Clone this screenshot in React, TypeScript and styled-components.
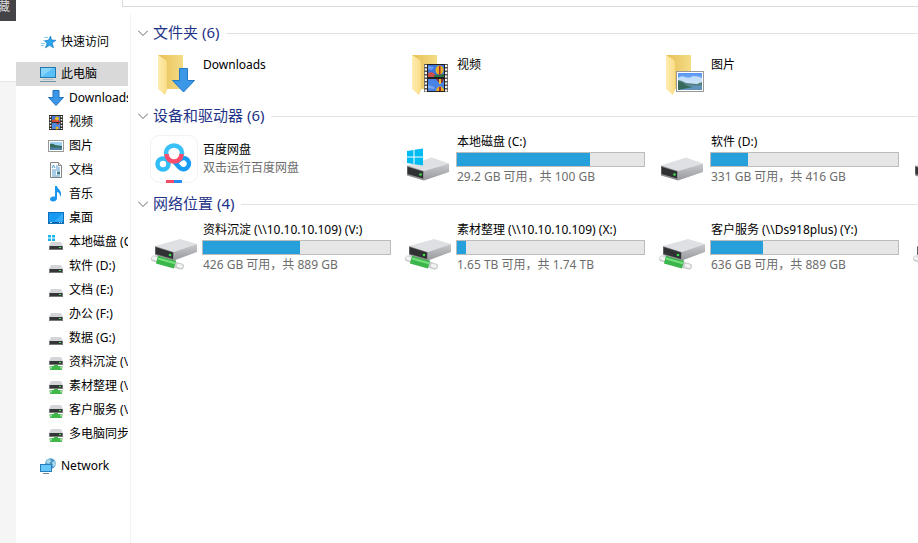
import React, { useState } from "react";
import styled, { createGlobalStyle } from "styled-components";

const GlobalStyle = createGlobalStyle`
  * { box-sizing: border-box; }
  body {
    margin: 0;
    background: #fff;
    color: #000;
    font: 12px/16px "Noto Sans", "Noto Sans CJK SC", sans-serif;
    overflow: hidden;
  }
  button { font: inherit; color: inherit; border: 0; background: none; padding: 0; margin: 0; text-align: left; cursor: default; }
  svg { display: block; flex: none; }
`;

const Window = styled.div`
  display: grid;
  grid-template-columns: 16px minmax(0, 1fr);
  min-height: 100vh;
`;
const Strip = styled.aside`
  display: flex;
  flex-direction: column;
`;
const StripTab = styled.div`
  height: 21px;
  background: #444347;
  color: #dcdcdc;
  line-height: 13px;
  overflow: hidden;
  display: flex;
  justify-content: flex-end;
  padding-right: 6px;
`;
const StripBody = styled.div`
  flex: 1;
  margin-top: 60px;
  background: #f5f5f5;
  border-top: 1px solid #e6e6e6;
`;
const Explorer = styled.div`
  display: flex;
  flex-direction: column;
  min-width: 0;
`;
const AddressBar = styled.div`
  height: 7px;
  margin-left: 106px;
  border: solid #d9d9d9;
  border-width: 0 0 1px 1px;
`;
const Panes = styled.div`
  flex: 1;
  display: grid;
  grid-template-columns: 115px minmax(0, 1fr);
  padding-top: 7px;
`;
const Sidebar = styled.nav`
  display: flex;
  flex-direction: column;
  gap: 8px;
  padding: 16px 2px 0 0;
  border-right: 1px solid #f2f2f2;
`;
const TreeGroup = styled.div`
  display: flex;
  flex-direction: column;
`;
const TreeItem = styled.button<{ $child?: boolean; $selected?: boolean }>`
  display: flex;
  align-items: center;
  gap: 5px;
  height: 24px;
  padding-left: ${(p) => (p.$child ? 32 : 24)}px;
  background: ${(p) => (p.$selected ? "#d9d9d9" : "transparent")};
  white-space: nowrap;
  overflow: hidden;
`;
const Content = styled.main`
  padding: 7px 0 0 7px;
  overflow: hidden;
`;
const Section = styled.section<{ $gap: number }>`
  margin-bottom: ${(p) => p.$gap}px;
`;
const SectionHeader = styled.h2`
  margin: 0;
  font-size: 15px;
  font-weight: 400;
  line-height: 22px;
  display: flex;
  align-items: center;
  gap: 7px;
  color: #1e3287;
  &::after { content: ""; flex: 1; height: 1px; background: #e2e2e2; }
`;
const Toggle = styled.button`
  display: flex;
  align-items: center;
  gap: 5px;
`;
const ToggleLabel = styled.span`
  padding-bottom: 2px;
`;
const Tiles = styled.div`
  display: grid;
  grid-template-columns: repeat(4, 254px);
  padding: 6px 0 0 12px;
`;
const Tile = styled.div`
  display: flex;
  gap: 4px;
  height: 50px;
`;
const TileText = styled.div<{ $top?: number }>`
  width: 189px;
  padding-top: ${(p) => p.$top ?? 0}px;
  white-space: nowrap;
`;
const Name = styled.div<{ $tall?: boolean }>`
  line-height: ${(p) => (p.$tall ? 18 : 16)}px;
  padding-left: 1px;
`;
const Detail = styled(Name)`
  color: #6d6d6d;
`;
const Track = styled.div`
  height: 15px;
  margin: 2px 0;
  border: 1px solid #bcbcbc;
  background: #e6e6e6;
`;
const Fill = styled.div`
  height: 100%;
  background: #26a0da;
`;

const Small = ({ children }: { children: React.ReactNode }) => (
  <svg width="16" height="16" viewBox="0 0 16 16" aria-hidden="true">{children}</svg>
);
const Large = ({ children }: { children: React.ReactNode }) => (
  <svg width="48" height="50" viewBox="0 0 48 50" aria-hidden="true">{children}</svg>
);

const Star = () => (
  <Small>
    <path d="M10.500 2l1 4 4.300.3-3.600 2.700 1.300 4.800-3.800-2.500-4.200 2.500 1.500-4.500L4.500 6.800l4-.6z" fill="#2ba4ee" stroke="#1679c0" strokeWidth=".7" />
    <path d="M4 3.500h4M3 6.500h2M1 9.500h4M1 11.500h3" stroke="#8ccbed" strokeWidth="1" />
  </Small>
);
const Monitor = () => (
  <Small>
    <rect x=".5" y="1.500" width="15" height="10" fill="#5cc0f8" stroke="#2378ae" />
    <path d="M1 11V2h12z" fill="#86d3fb" />
    <path d="M3 13.500h10" stroke="#b5bdc4" />
    <path d="M0 15.500h16" stroke="#6f94ad" />
  </Small>
);
const Arrow = () => (
  <Small><path d="M5 .5h6v7h4.500L8 15.500.5 7.500H5z" fill="#3a96e8" stroke="#1f73bd" /></Small>
);
const Film = () => (
  <Small>
    <rect x="1" y="1" width="14" height="15" fill="#302c29" />
    <path d="M2.500 2v13M13.500 2v13" stroke="#fff" strokeWidth="1.500" strokeDasharray="1.500 1.500" />
    <rect x="4" y="2" width="8" height="6" fill="#4376d8" /><rect x="4" y="9" width="8" height="6" fill="#4f8ae5" />
    <path d="M4 6l4-1 4 2v1H4z" fill="#d34d38" /><circle cx="9" cy="4.500" r="2" fill="#eebb20" />
    <path d="M8 9h3l-1 2z" fill="#b92f22" /><circle cx="9" cy="14" r="1.500" fill="#e3b720" />
  </Small>
);
const Photo = () => (
  <Small>
    <rect x=".5" y="2.500" width="15" height="11" fill="#fff" stroke="#999" />
    <path d="M2 4h12v8H2z" fill="#9fd0f4" /><path d="M2 6q3-1 5 1l7 1v2H2z" fill="#356c5b" /><path d="M2 9.500h12V12H2z" fill="#4b80a4" />
  </Small>
);
const Doc = () => (
  <Small>
    <path d="M2.500.5h8l3 3v12h-11z" fill="#fff" stroke="#858585" /><path d="M10.500.5v3h3" fill="#eee" stroke="#858585" />
    <path d="M4 6l1.500-3L7 6M8 4h2M8 6h4M4 8h8M4 10h4M4 12h4M4 14h8" stroke="#3c8dc5" fill="none" strokeWidth=".9" />
    <path d="M9 9.500h3v3H9z" fill="#397c8c" />
  </Small>
);
const Music = () => (
  <Small>
    <path d="M7 0h2c0 3 5 4 4 9l-1 2c.3-3-1-4.500-3-5v6.500c0 2-2 3-4 3S2 14.500 2 13s2-3 5-2.500z" fill="#1c96ec" />
  </Small>
);
const Desktop = () => (
  <Small>
    <rect x=".5" y="2.500" width="15" height="11" fill="#189af2" stroke="#0e6fbb" />
    <path d="M15 3v8L6 12z" fill="#36adfb" /><path d="M1 12.500h14" stroke="#0b5b9e" /><path d="M2 12.500h2M11 12.500h1M13 12.500h1" stroke="#c5eaff" />
  </Small>
);
const SmallDriveBody = ({ y }: { y: number }) => (
  <g transform={`translate(0 ${y})`}>
    <path d="M3 0h10l2 4H1z" fill="#d3d5d8" /><rect x="1" y="4" width="14" height="4" fill="#77797b" />
    <rect x="2" y="4" width="12" height="3" fill="#343638" /><rect x="11" y="5" width="2" height="1" fill="#4ee05b" />
  </g>
);
const Drive = () => <Small><SmallDriveBody y={7} /></Small>;
const SystemDrive = () => (
  <Small>
    <SmallDriveBody y={8} />
    <path d="M0 1h3v2.500H0zM4 1h3v2.500H4zM0 4.500h3V7H0zM4 4.500h3V7H4z" fill="#19b5ef" />
  </Small>
);
const NetDrive = () => (
  <Small>
    <SmallDriveBody y={3} />
    <path d="M6 11h4v1h4v4H2v-4h4z" fill="#42b74c" /><path d="M1 12.500h3v2H1zM12 12.500h3v2h-3z" fill="#a5d9a8" />
  </Small>
);
const NetworkIcon = () => (
  <Small>
    <circle cx="10.500" cy="5.500" r="5.300" fill="#4b96c6" /><path d="M7 2l3-1 1 2-2 3-3-1zM12 4l3-1 1 4-3 2z" fill="#a9d8e8" />
    <rect x=".5" y="6.500" width="11" height="7" fill="#66c7fb" stroke="#287dbb" /><path d="M3 15.500h6" stroke="#66869c" />
  </Small>
);

const FolderShape = () => (
  <>
    <path d="M8 4h25v34H14z" fill="url(#folderBack)" />
    <path d="M8 4l8 5 1 3v27l-2 5-7-6z" fill="url(#folderFront)" />
  </>
);
const FolderDownload = () => (
  <Large><FolderShape /><path d="M29.500 17.500h8v12h7l-11 11.500-11-11.500h7z" fill="#3b98e8" stroke="#2479c4" /></Large>
);
const FolderVideo = () => (
  <Large>
    <FolderShape />
    <rect x="20" y="13" width="24" height="28" fill="#5c5a57" />
    <path d="M22 14v27M42 14v27" stroke="#f5f5f5" strokeWidth="2.500" strokeDasharray="2 1.500" />
    <rect x="23" y="13" width="18" height="28" fill="#22201f" />
    <rect x="24" y="14" width="16" height="12" fill="#3c73dc" /><rect x="24" y="28" width="16" height="12" fill="#4a83e6" />
    <path d="M24 22l4-1 4 3v2h-8z" fill="#cf504a" /><path d="M30 24l10-1v3H30z" fill="#28754b" />
    <ellipse cx="35.500" cy="19" rx="4" ry="4.500" fill="#e7af22" /><path d="M35 15h1.500v9H35z" fill="#a72731" />
    <path d="M24 15l6 1-2 3-4-1z" fill="#6b9df0" /><path d="M32 28h8l-2 4h-3z" fill="#8d3030" /><path d="M35 28h2v5h-2z" fill="#eac337" />
    <path d="M32 40c0-6 8-6 8 0z" fill="#e7af22" /><path d="M35 36h2v4h-2z" fill="#a72731" /><path d="M24 34l6 2v2l-6-1z" fill="#7daaf0" />
  </Large>
);
const FolderPhoto = () => (
  <Large>
    <FolderShape />
    <rect x="18.500" y="20.500" width="27" height="20" fill="#fff" stroke="#999" />
    <path d="M20 22h24v17H20z" fill="url(#sky)" />
    <path d="M20 27q4-3 7-1 4 2 8-1 5 0 9 2v6H20z" fill="#d7ebfa" opacity=".8" />
    <path d="M20 34h24v5H20z" fill="#5f93bb" />
    <path d="M20 29l4 1 4 2 5 .5 6 .5 5-2v3.500H20z" fill="#557f7c" />
    <path d="M20 30l5 2 4 3 6 1-15 3z" fill="#35695a" />
  </Large>
);
const LargeDrive = ({ system }: { system?: boolean }) => (
  <Large>
    <path d="M3 31.500L28 23.500l17 6-25 7.500z" fill="#dfe0e3" />
    <path d="M20 37l25-7.500v8.500L20 46.500z" fill="url(#driveSide)" />
    <path d="M3 31.500L20 37v9.500L3 41.500z" fill="#8e9092" />
    <path d="M3.500 32.800L19 37.500v7L3.500 40z" fill="#2f3133" />
    <circle cx="16.500" cy="40.500" r="1.300" fill="#3de24b" />
    {system && <path d="M3 17l6.500-1v6.500H3zM10.500 15.800L19 14.500v8h-8.500zM3 23.500h6.500V30L3 29zM10.500 23.500H19v8l-8.500-1.300z" fill="#00bcf2" />}
  </Large>
);
const LargeNetDrive = () => (
  <Large>
    <path d="M4 36.500l27 8" stroke="#c9cccc" strokeWidth="6" strokeLinecap="round" />
    <path d="M3.500 36l3 1M28.500 43.500l2.500.7" stroke="#f1f3f3" strokeWidth="3.500" strokeLinecap="round" />
    <path d="M7 37.500l18 5" stroke="#3cb54b" strokeWidth="8.500" /><path d="M8 36.500l17 4.700" stroke="#74e07e" strokeWidth="2" />
    <path d="M5 24L30 17l17 5-22 8z" fill="#dfe0e3" />
    <path d="M24 30l23-8v8L24 38.500z" fill="url(#driveSide)" />
    <path d="M5 24l19 6v8.500L5 33z" fill="#8e9092" /><path d="M5.500 25L23 30.500v6.500L5.500 32z" fill="#2f3133" />
    <circle cx="20" cy="33" r="1.300" fill="#3de24b" />
  </Large>
);
const Netdisk = () => (
  <Large>
    <rect x=".5" y="1.500" width="47" height="47" rx="9" fill="#fff" stroke="#f2f2f2" />
    <g fill="none" strokeWidth="4.500">
      <circle cx="13" cy="30" r="5.500" stroke="#30bdf8" />
      <path d="M24 27.500l5.500 6a5.500 5.500 0 1 0 1-8.500l-6 5" stroke="#169cf5" />
      <path d="M17 23l-1-4a8 7.500 0 1 1 16 0l-1 4" stroke="#39c1f8" />
      <path d="M31.500 20a7.500 7.500 0 0 1-15 0" stroke="#fa4d6d" />
    </g>
    <path d="M16 46h8v3h-8z" fill="#f34b63" /><path d="M24 46h8v3h-8z" fill="#238df2" />
  </Large>
);
const Defs = () => (
  <svg width="0" height="0" aria-hidden="true">
    <defs>
      <linearGradient id="folderBack"><stop stopColor="#e6bf54" /><stop offset="1" stopColor="#f5dc87" /></linearGradient>
      <linearGradient id="folderFront"><stop stopColor="#ffedb0" /><stop offset="1" stopColor="#f8dc87" /></linearGradient>
      <linearGradient id="driveSide" x2="0" y2="1"><stop stopColor="#c9cacd" /><stop offset="1" stopColor="#97999c" /></linearGradient>
      <linearGradient id="sky" x2="0" y2="1"><stop stopColor="#5594f2" /><stop offset="1" stopColor="#b8dcfa" /></linearGradient>
    </defs>
  </svg>
);

const places: [string, React.FC][] = [
  ["Downloads", Arrow],
  ["视频", Film],
  ["图片", Photo],
  ["文档", Doc],
  ["音乐", Music],
  ["桌面", Desktop],
  ["本地磁盘 (C:)", SystemDrive],
  ["软件 (D:)", Drive],
  ["文档 (E:)", Drive],
  ["办公 (F:)", Drive],
  ["数据 (G:)", Drive],
  ["资料沉淀 (\\\\10.10.10.109) (V:)", NetDrive],
  ["素材整理 (\\\\10.10.10.109) (X:)", NetDrive],
  ["客户服务 (\\\\Ds918plus) (Y:)", NetDrive],
  ["多电脑同步", NetDrive],
];

function Group({ title, gap, children }: { title: string; gap: number; children: React.ReactNode }) {
  const [open, setOpen] = useState(true);
  return (
    <Section $gap={gap}>
      <SectionHeader>
        <Toggle aria-expanded={open} onClick={() => setOpen(!open)}>
          <svg width="10" height="6" viewBox="0 0 10 6" aria-hidden="true"><path d="M0 .5l5 5 5-5" fill="none" stroke="#666" /></svg>
          <ToggleLabel>{title}</ToggleLabel>
        </Toggle>
      </SectionHeader>
      {open && <Tiles>{children}</Tiles>}
    </Section>
  );
}

function FolderTile({ name, icon }: { name: string; icon: React.ReactNode }) {
  return <Tile>{icon}<TileText $top={5}><Name $tall>{name}</Name></TileText></Tile>;
}

function DriveTile({ name, detail, used, icon }: { name: string; detail: string; used: number; icon: React.ReactNode }) {
  return (
    <Tile>
      {icon}
      <TileText>
        <Name>{name}</Name>
        <Track role="progressbar" aria-label={name} aria-valuenow={used}><Fill style={{ width: `${used}%` }} /></Track>
        <Detail>{detail}</Detail>
      </TileText>
    </Tile>
  );
}

export default function App() {
  return (
    <>
      <GlobalStyle />
      <Window>
        <Strip><StripTab>藏</StripTab><StripBody /></Strip>
        <Explorer>
          <AddressBar />
          <Panes>
            <Sidebar>
              <TreeItem><Star />快速访问</TreeItem>
              <TreeGroup>
                <TreeItem $selected><Monitor />此电脑</TreeItem>
                {places.map(([label, Icon]) => (
                  <TreeItem key={label} $child><Icon />{label}</TreeItem>
                ))}
              </TreeGroup>
              <TreeItem><NetworkIcon />Network</TreeItem>
            </Sidebar>
            <Content>
              <Group title="文件夹 (6)" gap={3}>
                <FolderTile name="Downloads" icon={<FolderDownload />} />
                <FolderTile name="视频" icon={<FolderVideo />} />
                <FolderTile name="图片" icon={<FolderPhoto />} />
              </Group>
              <Group title="设备和驱动器 (6)" gap={8}>
                <Tile>
                  <Netdisk />
                  <TileText $top={7}><Name $tall>百度网盘</Name><Detail $tall>双击运行百度网盘</Detail></TileText>
                </Tile>
                <DriveTile name="本地磁盘 (C:)" detail="29.2 GB 可用，共 100 GB" used={71} icon={<LargeDrive system />} />
                <DriveTile name="软件 (D:)" detail="331 GB 可用，共 416 GB" used={20} icon={<LargeDrive />} />
                <Tile><LargeDrive /></Tile>
              </Group>
              <Group title="网络位置 (4)" gap={8}>
                <DriveTile name="资料沉淀 (\\10.10.10.109) (V:)" detail="426 GB 可用，共 889 GB" used={52} icon={<LargeNetDrive />} />
                <DriveTile name="素材整理 (\\10.10.10.109) (X:)" detail="1.65 TB 可用，共 1.74 TB" used={5} icon={<LargeNetDrive />} />
                <DriveTile name="客户服务 (\\Ds918plus) (Y:)" detail="636 GB 可用，共 889 GB" used={28} icon={<LargeNetDrive />} />
                <Tile><LargeNetDrive /></Tile>
              </Group>
            </Content>
          </Panes>
        </Explorer>
      </Window>
      <Defs />
    </>
  );
}
